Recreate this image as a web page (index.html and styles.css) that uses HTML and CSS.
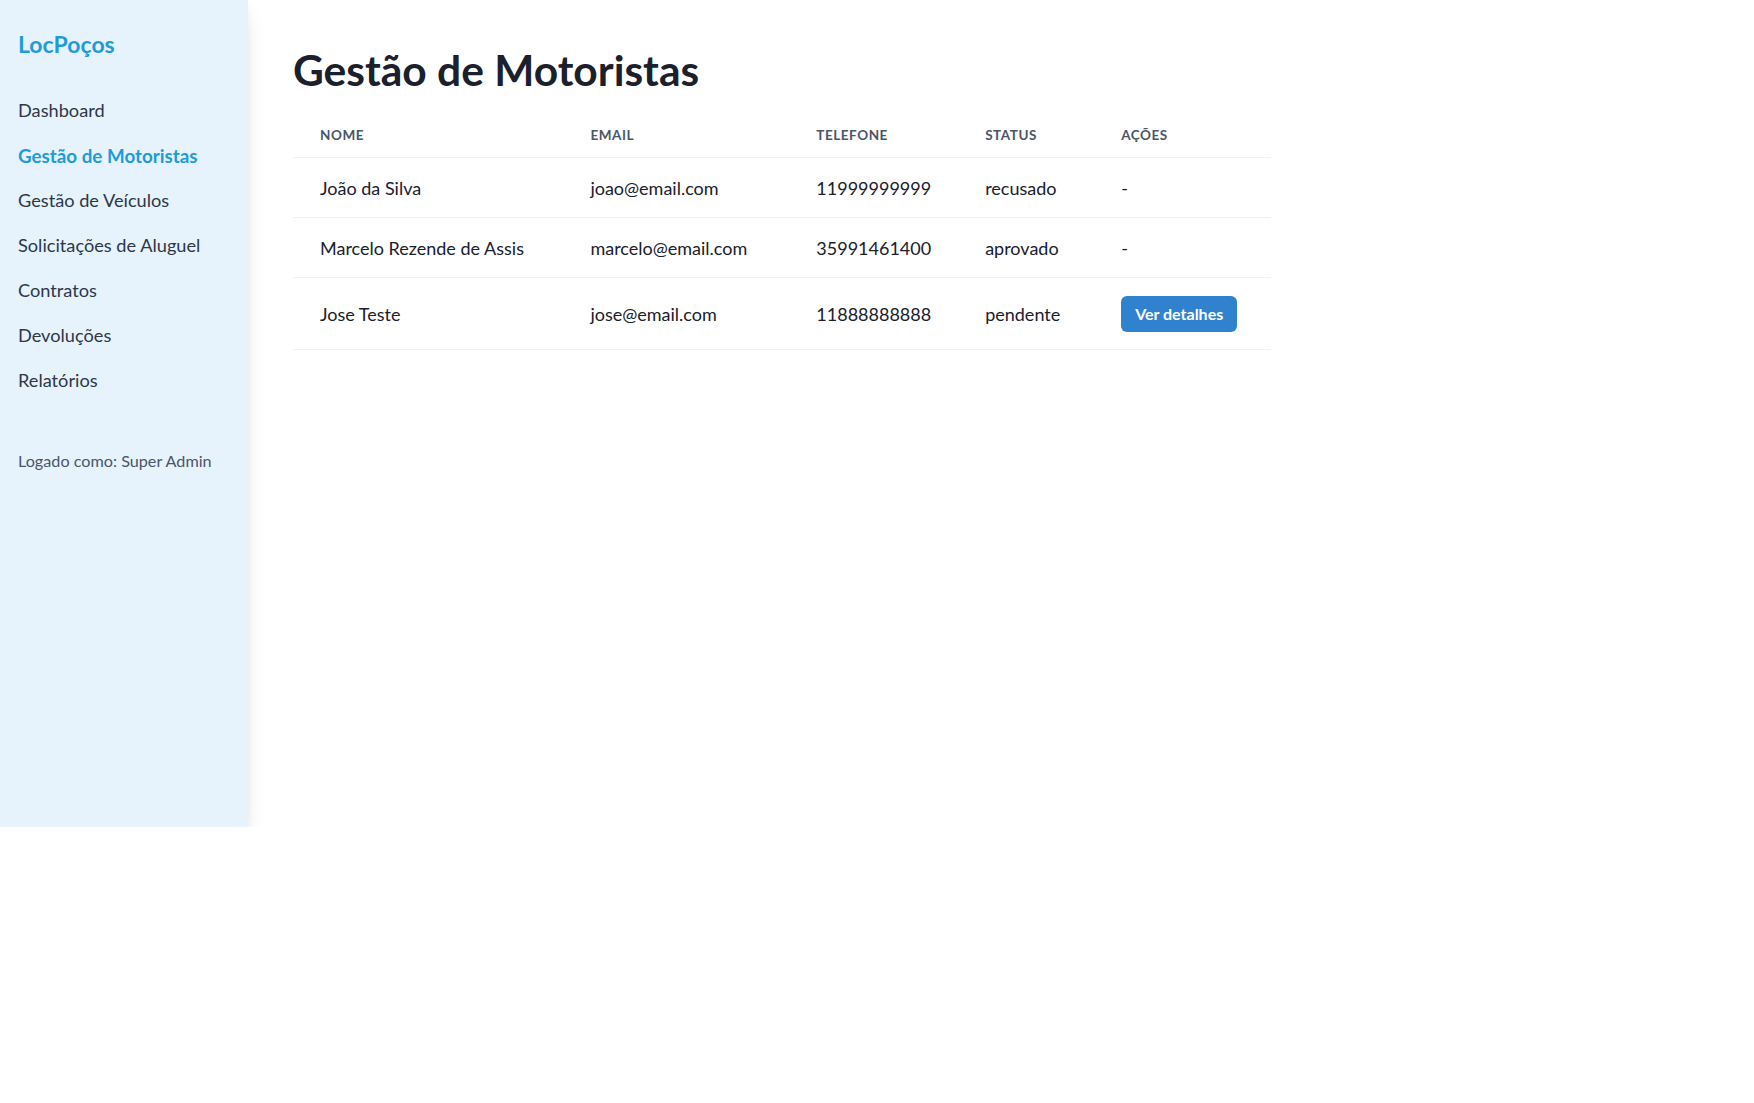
FILE: index.html
```html
<!DOCTYPE html>
<html lang="pt-BR">
<head>
<meta charset="utf-8">
<title>LocPoços - Gestão de Motoristas</title>
<link rel="stylesheet" href="styles.css">
</head>
<body>
<div class="layout">
  <aside class="sidebar">
    <div class="logo">LocPoços</div>
    <nav class="nav">
      <a class="nav-link" href="#">Dashboard</a>
      <a class="nav-link active" href="#">Gestão de Motoristas</a>
      <a class="nav-link" href="#">Gestão de Veículos</a>
      <a class="nav-link" href="#">Solicitações de Aluguel</a>
      <a class="nav-link" href="#">Contratos</a>
      <a class="nav-link" href="#">Devoluções</a>
      <a class="nav-link" href="#">Relatórios</a>
    </nav>
    <div class="logged">Logado como: Super Admin</div>
  </aside>
  <main class="main">
    <h1 class="title">Gestão de Motoristas</h1>
    <table class="table">
      <thead>
        <tr>
          <th class="c-nome">Nome</th>
          <th class="c-email">Email</th>
          <th class="c-tel">Telefone</th>
          <th class="c-status">Status</th>
          <th class="c-acoes">Ações</th>
        </tr>
      </thead>
      <tbody>
        <tr>
          <td>João da Silva</td>
          <td>joao@email.com</td>
          <td>11999999999</td>
          <td>recusado</td>
          <td>-</td>
        </tr>
        <tr>
          <td>Marcelo Rezende de Assis</td>
          <td>marcelo@email.com</td>
          <td>35991461400</td>
          <td>aprovado</td>
          <td>-</td>
        </tr>
        <tr>
          <td>Jose Teste</td>
          <td>jose@email.com</td>
          <td>11888888888</td>
          <td>pendente</td>
          <td><button class="btn">Ver detalhes</button></td>
        </tr>
      </tbody>
    </table>
  </main>
</div>
</body>
</html>
```
FILE: styles.css
```css
* { box-sizing: border-box; }
html, body { margin: 0; padding: 0; background: #ffffff; }
body {
  font-family: "Lato", "Liberation Sans", sans-serif;
  color: #1A202C;
}
.layout {
  display: flex;
  align-items: flex-start;
}
.sidebar {
  width: 248px;
  height: 827px;
  flex-shrink: 0;
  background: #E6F3FC;
  padding: 29px 18px 0 18px;
  box-shadow: 0 12px 20px -4px rgba(0,0,0,0.13), 0 4px 8px -2px rgba(0,0,0,0.06);
}
.logo {
  font-size: 23px;
  font-weight: 700;
  line-height: 30px;
  color: #1F9BD8;
  margin-bottom: 29px;
}
.nav {
  display: flex;
  flex-direction: column;
}
.nav-link {
  display: block;
  font-size: 18.2px;
  line-height: 27px;
  padding: 9px 0;
  color: #2D3748;
  text-decoration: none;
}
.nav-link.active {
  color: #1F9BD8;
  font-weight: 700;
  font-size: 18.8px;
}
.logged {
  margin-top: 46px;
  font-size: 16.2px;
  line-height: 23px;
  color: #4A5568;
}
.main {
  flex: 1;
  padding: 45px 45px 40px 45px;
}
.title {
  margin: 0 0 19px 0;
  font-size: 42.5px;
  line-height: 49px;
  font-weight: 700;
  color: #1A202C;
}
.table {
  border-collapse: collapse;
  width: 978px;
}
.table th {
  text-align: left;
  font-size: 13.5px;
  font-weight: 700;
  line-height: 18px;
  letter-spacing: 0.04em;
  text-transform: uppercase;
  color: #4A5568;
  padding: 13px 27px;
  border-bottom: 1px solid #EDF2F7;
}
.table td {
  font-size: 18px;
  line-height: 24px;
  padding: 17.5px 27px;
  border-bottom: 1px solid #EDF2F7;
  color: #1A202C;
}
.c-nome { width: 271px; }
.c-email { width: 226px; }
.c-tel { width: 168px; }
.c-status { width: 136px; }
.c-acoes { width: 177px; }
.btn {
  font-family: inherit;
  font-size: 16px;
  font-weight: 700;
  color: #ffffff;
  background: #3182CE;
  border: none;
  border-radius: 6px;
  height: 36px;
  padding: 0 14px;
  display: block;
}
```
